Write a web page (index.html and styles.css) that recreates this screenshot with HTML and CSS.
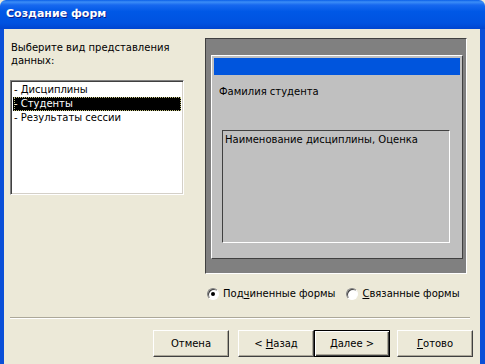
FILE: index.html
```html
<!DOCTYPE html>
<html lang="ru">
<head>
    <meta charset="UTF-8">
    <title>Создание форм</title>
    <link rel="stylesheet" href="styles.css">
</head>
<body>
    <div class="window">
        <div class="titlebar">Создание форм</div>
        <div class="frame">
            <div class="main">
                <div class="left">
                    <div class="prompt">Выберите вид представления данных:</div>
                    <div class="listbox">
                        <div class="item">- Дисциплины</div>
                        <div class="item selected"><span class="focus">- Студенты</span></div>
                        <div class="item">- Результаты сессии</div>
                    </div>
                </div>
                <div class="right">
                    <div class="preview">
                        <div class="form">
                            <div class="form-head"></div>
                            <div class="field">Фамилия студента</div>
                            <div class="subform">Наименование дисциплины, Оценка</div>
                        </div>
                    </div>
                    <div class="radios">
                        <label class="radio"><span class="dot checked"></span><span>Под<u>ч</u>иненные формы</span></label>
                        <label class="radio"><span class="dot"></span><span><u>С</u>вязанные формы</span></label>
                    </div>
                </div>
            </div>
            <div class="separator"></div>
            <div class="buttons">
                <button type="button" class="btn gap-wide">Отмена</button>
                <button type="button" class="btn">&lt; <u>Н</u>азад</button>
                <button type="button" class="btn default gap"><u>Д</u>алее &gt;</button>
                <button type="button" class="btn"><u>Г</u>отово</button>
            </div>
        </div>
    </div>
</body>
</html>
```

FILE: styles.css
```css
body {
    margin: 0;
    font-family: "DejaVu Sans", Arial, sans-serif;
    font-size: 10px;
    color: #000;
    background: #ece9d8;
}
.window {
    width: 485px;
    height: 364px;
    overflow: hidden;
}
.titlebar {
    height: 29px;
    box-sizing: border-box;
    padding: 7px 0 0 6px;
    color: #fff;
    font-weight: bold;
    font-size: 11px;
    text-shadow: 1px 1px 0 #0a1e8c;
    background: linear-gradient(#0a5fe8 0, #3c8ef7 2px, #1768ef 5px, #0058e6 40%, #0052e0 80%, #0045d0 100%);
    border-radius: 6px 6px 0 0;
}
.frame {
    height: 335px;
    box-sizing: border-box;
    border-left: 4px solid #0a4fd8;
    border-right: 5px solid #0a4fd8;
    background: #ece9d8;
}
.main {
    display: flex;
    padding: 9px 0 0 6px;
}
.left {
    width: 174px;
    padding-top: 3px;
}
.prompt {
    line-height: 13px;
    padding-left: 1px;
    height: 39px;
}
.listbox {
    height: 115px;
    box-sizing: border-box;
    background: #fff;
    border: 1px solid;
    border-color: #808080 #fff #fff #808080;
    box-shadow: inset 1px 1px 0 #404040, inset -1px -1px 0 #d4d0c8;
    padding: 2px 2px;
}
.item {
    height: 14px;
    line-height: 14px;
    padding-left: 1px;
    white-space: nowrap;
}
.item.selected {
    background: #000;
    color: #fff;
}
.focus {
    display: block;
    outline: 1px dotted #c0c080;
    outline-offset: -1px;
}
.right {
    margin-left: 21px;
    width: 262px;
}
.preview {
    height: 236px;
    box-sizing: border-box;
    background: #808080;
    border: 1px solid;
    border-color: #404040 #fff #fff #404040;
    padding: 16px 3px 0 5px;
}
.form {
    height: 204px;
    box-sizing: border-box;
    background: #c0c0c0;
    border: 1px solid;
    border-color: #fff #404040 #404040 #fff;
    padding: 2px 2px 0 2px;
}
.form-head {
    height: 17px;
    background: #0055dd;
}
.field {
    padding: 10px 0 0 5px;
    line-height: 13px;
}
.subform {
    margin: 32px 10px 0 8px;
    height: 113px;
    box-sizing: border-box;
    border: 1px solid;
    border-color: #404040 #fff #fff #404040;
    padding: 2px 0 0 2px;
    line-height: 13px;
}
.radios {
    display: flex;
    padding: 13px 0 0 2px;
    line-height: 13px;
    white-space: nowrap;
}
.radio {
    display: flex;
    align-items: center;
    margin-right: 11px;
}
.dot {
    width: 12px;
    height: 12px;
    box-sizing: border-box;
    border-radius: 50%;
    background: #fff;
    border: 1px solid;
    border-color: #808080 #fff #fff #808080;
    box-shadow: inset 1px 1px 0 #404040;
    margin-right: 4px;
    position: relative;
}
.dot.checked::after {
    content: "";
    position: absolute;
    left: 3px;
    top: 3px;
    width: 4px;
    height: 4px;
    border-radius: 50%;
    background: #000;
}
.separator {
    margin: 17px 10px 0 6px;
    height: 1px;
    background: #aca899;
    border-bottom: 1px solid #fff;
}
.buttons {
    display: flex;
    justify-content: flex-end;
    padding: 11px 7px 0 0;
}
.btn {
    width: 76px;
    height: 27px;
    font-family: inherit;
    font-size: 10px;
    color: #000;
    background: #ece9d8;
    border: 1px solid;
    border-color: #fff #404040 #404040 #fff;
    box-shadow: inset -1px -1px 0 #aca899;
    padding: 0;
}
.btn.default {
    border: 1px solid #000;
    box-shadow: inset 1px 1px 0 #fff, inset -1px -1px 0 #404040, inset -2px -2px 0 #aca899;
}
.gap-wide {
    margin-right: 9px;
}
.gap {
    margin-right: 7px;
}
```
